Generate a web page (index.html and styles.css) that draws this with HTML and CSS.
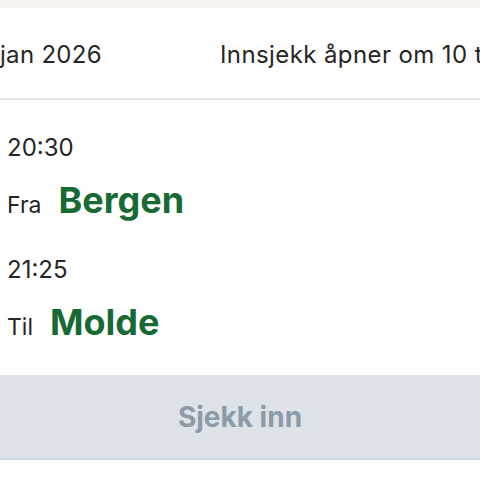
FILE: index.html
```html
<!DOCTYPE html>
<html lang="no">
<head>
<meta charset="utf-8">
<link rel="stylesheet" href="styles.css">
</head>
<body>
<div class="page">
  <div class="topbar"></div>
  <div class="header">
    <span class="date">jan 2026</span>
    <span class="status">Innsjekk åpner om 10 timer</span>
  </div>
  <div class="legs">
    <div class="leg">
      <div class="time">20:30</div>
      <div class="place"><span class="label">Fra</span><span class="city">Bergen</span></div>
    </div>
    <div class="leg">
      <div class="time">21:25</div>
      <div class="place"><span class="label">Til</span><span class="city">Molde</span></div>
    </div>
  </div>
  <div class="button">Sjekk inn</div>
</div>
</body>
</html>
```
FILE: styles.css
```css
html, body {
  margin: 0;
  padding: 0;
  background: #ffffff;
}
body {
  font-family: Inter, "Noto Sans", sans-serif;
  color: #262626;
  width: 480px;
  height: 480px;
  overflow: hidden;
}
.page {
  display: flex;
  flex-direction: column;
  width: 480px;
}
.topbar {
  height: 8px;
  background: #f7f3f0;
}
.header {
  height: 87px;
  padding-top: 3px;
  border-bottom: 2px solid #e6e6e6;
  display: flex;
  align-items: center;
  white-space: nowrap;
  overflow: hidden;
  font-size: 24px;
}
.date {
  width: 220px;
  flex: none;
  letter-spacing: 0.3px;
}
.status {
  flex: none;
  letter-spacing: 0.4px;
}
.legs {
  display: flex;
  flex-direction: column;
  padding: 34px 0 0 7px;
  gap: 34px;
}
.leg {
  display: flex;
  flex-direction: column;
  gap: 16px;
}
.time {
  font-size: 24px;
  line-height: 28px;
}
.place {
  display: flex;
  align-items: baseline;
  gap: 17px;
}
.label {
  font-size: 23px;
}
.city {
  font-size: 36px;
  font-weight: 700;
  color: #176a34;
  line-height: 44px;
}
.button {
  margin-top: 31px;
  height: 83px;
  background: #dde3e8;
  border-bottom: 2px solid #d3dbe2;
  display: flex;
  align-items: center;
  justify-content: center;
  font-size: 28px;
  font-weight: 700;
  color: #8c9ba7;
}
```
